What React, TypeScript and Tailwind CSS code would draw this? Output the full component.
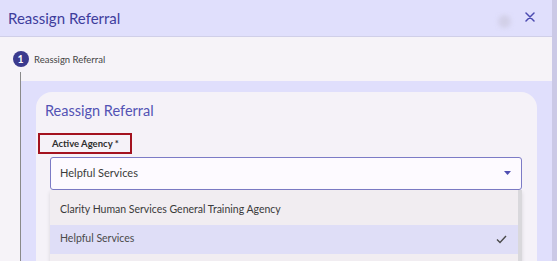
import React from "react";

export default function App() {
  const font = { fontFamily: "Lato, 'Noto Sans', sans-serif" };
  return (
    <div
      className="w-[557px] h-[261px] overflow-hidden flex bg-[#f6f3f8]"
      style={font}
    >
      <div className="flex-1 flex flex-col min-w-0">
        {/* header */}
        <div className="h-[37px] shrink-0 bg-[#e0dffc] border-b border-[#d0cfe8] flex items-center pl-[8px] pr-[17px]">
          <div className="text-[15px] text-[#3e3d9c] leading-none flex-1 mt-[1px]">Reassign Referral</div>
          <div className="w-[13px] h-[13px] rounded-full bg-[#d2d0e8] blur-[2px] mr-[14px] mt-[6px]" />
          <svg width="10" height="10" viewBox="0 0 10 10" className="-mt-[2px]">
            <path d="M1 1 L9 9 M9 1 L1 9" stroke="#4c4bb0" strokeWidth="1.5" strokeLinecap="round" />
          </svg>
        </div>
        {/* stepper */}
        <div className="h-[44px] shrink-0 flex bg-[#f6f3f8]">
          <div className="w-[41px] shrink-0 flex flex-col items-center pt-[14px]">
            <div className="w-[16px] h-[16px] rounded-full bg-[#3b3a8e] text-white text-[10.5px] font-bold flex items-center justify-center leading-none">
              1
            </div>
            <div className="w-px flex-1 mt-[5px] bg-[#8a8a8a]" />
          </div>
          <div className="pt-[18px] text-[9.5px] text-[#454545] leading-none -ml-[7px]">Reassign Referral</div>
        </div>
        {/* body */}
        <div className="flex-1 flex min-h-0">
          <div className="w-[20px] shrink-0 bg-[#f6f3f8]" />
          <div className="w-px shrink-0 bg-[#8a8a8a]" />
          <div className="flex-1 bg-[#e0dffc] pl-[15px] pr-[15px] pt-[11px]">
            <div className="h-full bg-[#f5f2f8] rounded-t-[16px] pl-[14px] pr-[15px] pt-[12px]">
              <div className="text-[14.5px] text-[#5352b4] leading-none -ml-[5px]">Reassign Referral</div>
              <div className="relative mt-[19px] h-[13px] flex items-center">
                <span className="text-[9.5px] font-bold text-[#2e2e2e] leading-none pl-[2px]">Active Agency *</span>
                <span className="absolute -left-[12px] -top-[5px] w-[94px] h-[21px] border-2 border-[#a3121f]" />
              </div>
              <div className="mt-[6px] h-[33px] border-[1.5px] border-[#7c7bc6] rounded-[3px] bg-[#fdfaff] flex items-center pl-[9px] pr-[10px]">
                <span className="flex-1 text-[11px] text-[#3a3a3a]">Helpful Services</span>
                <svg width="7" height="4" viewBox="0 0 7 4">
                  <path d="M0 0 L7 0 L3.5 4 Z" fill="#4f4eb2" />
                </svg>
              </div>
              <div className="flex bg-[#f1edf1] shadow-[0_2px_4px_rgba(0,0,0,0.12)]">
                <div className="flex-1 pt-[6px] text-[10.5px] text-[#3a3a3a]">
                  <div className="h-[29px] flex items-center pl-[10px]">Clarity Human Services General Training Agency</div>
                  <div className="h-[29px] flex items-center pl-[10px] pr-[11px] bg-[#dfdef7] text-[#4a4a4a]">
                    <span className="flex-1">Helpful Services</span>
                    <svg width="11" height="9" viewBox="0 0 11 9">
                      <path d="M1 4.5 L4 7.5 L10 1" stroke="#4a4a4a" strokeWidth="1.4" fill="none" />
                    </svg>
                  </div>
                  <div className="h-[29px]" />
                </div>
                <div className="w-[4px] shrink-0 bg-[#d9d8dc]" />
              </div>
            </div>
          </div>
        </div>
      </div>
      <div className="w-[5px] shrink-0 bg-[#cbc9e6]" />
    </div>
  );
}
